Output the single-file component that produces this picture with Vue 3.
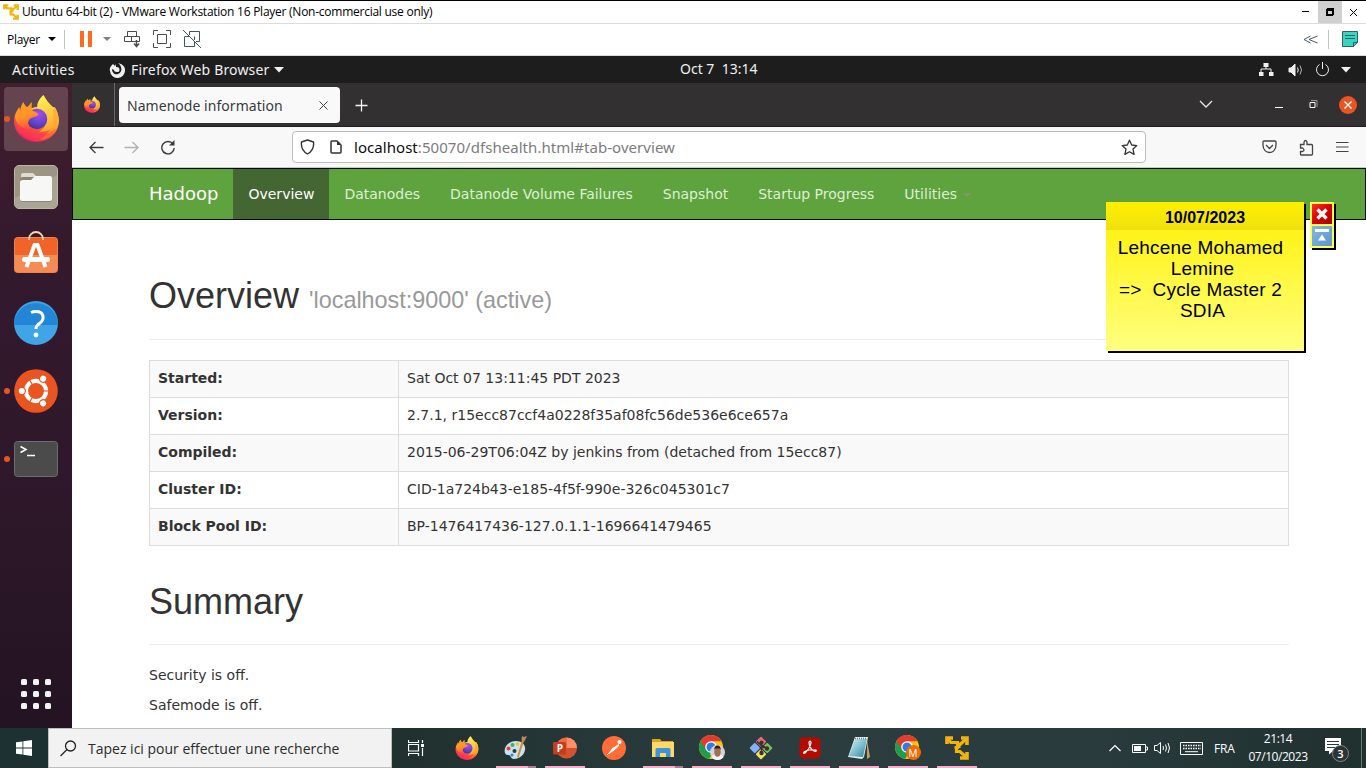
<script setup>
const navItems = ['Overview', 'Datanodes', 'Datanode Volume Failures', 'Snapshot', 'Startup Progress', 'Utilities']
const rows = [
  ['Started:', 'Sat Oct 07 13:11:45 PDT 2023'],
  ['Version:', '2.7.1, r15ecc87ccf4a0228f35af08fc56de536e6ce657a'],
  ['Compiled:', '2015-06-29T06:04Z by jenkins from (detached from 15ecc87)'],
  ['Cluster ID:', 'CID-1a724b43-e185-4f5f-990e-326c045301c7'],
  ['Block Pool ID:', 'BP-1476417436-127.0.1.1-1696641479465'],
]
const dock = [
  { icon: 'firefox', active: true, dot: true },
  { icon: 'files' },
  { icon: 'software' },
  { icon: 'help' },
  { icon: 'ubuntu', dot: true },
  { icon: 'terminal', dot: true },
]
const tasks = [
  { icon: 'firefox' },
  { icon: 'paint', line: 'multi' },
  { icon: 'ppt', line: 'single', letter: 'P' },
  { icon: 'postman' },
  { icon: 'explorer', line: 'multi' },
  { icon: 'chromeA', line: 'single' },
  { icon: 'git', line: 'single' },
  { icon: 'acrobat', line: 'single' },
  { icon: 'notepad', line: 'single' },
  { icon: 'chromeB', line: 'single', letter: 'M' },
  { icon: 'vmware', line: 'single' },
]
</script>

<template>
  <div class="screen">
    <svg class="defs" width="0" height="0">
      <defs>
        <linearGradient id="fxBody" x1="0.8" y1="0" x2="0.3" y2="1">
          <stop offset="0" stop-color="#fff44f" /><stop offset="0.35" stop-color="#ffb52a" /><stop offset="0.62" stop-color="#ff5b36" /><stop offset="1" stop-color="#e9106f" />
        </linearGradient>
        <linearGradient id="fxTail" x1="0.4" y1="0" x2="0.6" y2="1">
          <stop offset="0" stop-color="#fff155" /><stop offset="1" stop-color="#ffa42c" />
        </linearGradient>
        <radialGradient id="fxGlobe" cx="0.6" cy="0.25" r="0.75">
          <stop offset="0" stop-color="#a84bf0" /><stop offset="0.6" stop-color="#6a45cf" /><stop offset="1" stop-color="#4337a0" />
        </radialGradient>
        <linearGradient id="fxEar" x1="0" y1="0" x2="0.3" y2="1">
          <stop offset="0" stop-color="#ff9a20" /><stop offset="0.6" stop-color="#ff9528" /><stop offset="1" stop-color="#ff5a34" />
        </linearGradient>
        <linearGradient id="noteBlue" x1="0" y1="0" x2="1" y2="1">
          <stop offset="0" stop-color="#d8f1f5" /><stop offset="0.5" stop-color="#7fc0d0" /><stop offset="1" stop-color="#2f8096" />
        </linearGradient>
      </defs>
      <symbol id="firefox" viewBox="0 0 44 46">
        <path d="M9 7c1 2 2 4 4 5 2-2 3-3 4-5v6c4-2 8-2 12 0l11-1c3 5 4 10 4 13 0 12-10 21-22 21S0 37 0 26c0-7 3-11 5-14l1 5c1-4 2-7 3-10z" fill="url(#fxBody)" />
        <path d="M29 0c-5 4-7 9-6 13 5 1 9 5 9 11 0 5-3 9-7 12 10 0 19-5 18-16-1-8-8-8-14-20z" fill="url(#fxTail)" />
        <path d="M40 12c3 5 4 10 3 16-1 8-8 15-18 16 9-5 16-15 13-28z" fill="#ffa636" opacity="0.700" />
        <circle cx="22.500" cy="23.500" r="10" fill="url(#fxGlobe)" />
        <path d="M1 20c-2 10 4 22 18 25 11 1 19-5 22-12-8 7-20 7-26-1z" fill="#ff3f4c" opacity="0.500" />
        <path d="M9 7c1 2 2 4 4 5 2-2 3-3 4-5v8c3 1 6 2 7 4-2 3-7 2-9 5-2 3-1 6 1 9C6 33 1 27 1 20c1-2 3-4 4-8l1 4c0-3 1-6 3-9z" fill="url(#fxEar)" />
      </symbol>
      <symbol id="files" viewBox="0 0 44 44">
        <rect x="0.500" y="0.500" width="43" height="43" rx="4.500" fill="#9c9583" stroke="#bab5a5" />
        <path d="M1 33L43 10v29a4 4 0 0 1-4 4H5a4 4 0 0 1-4-4z" fill="#aaa494" />
        <path d="M7 10q0-2 2-2h10l3 3v8H7z" fill="#dedbd2" />
        <rect x="6" y="12" width="32" height="25" rx="3" fill="#8b8475" />
        <path d="M9 15h8l4-4h15q2 0 2 2v21q0 2-2 2H8q-2 0-2-2V17q0-2 3-2z" fill="#f7f7f5" />
      </symbol>
      <symbol id="software" viewBox="0 0 44 44">
        <rect x="0.500" y="7.500" width="43" height="35" rx="3" fill="#f06329" stroke="#f5814f" />
        <path d="M1 25h42v15q0 2-2 2H3q-2 0-2-2z" fill="#f58b55" />
        <path d="M15 10V9a7 7 0 0 1 14 0v1" fill="none" stroke="#f6d8b4" stroke-width="1.800" />
        <path d="M12.500 37l8-22h3l8 22" fill="none" stroke="#fff" stroke-width="4" />
        <rect x="8" y="27" width="28" height="5" rx="2.500" fill="#fff" />
      </symbol>
      <symbol id="help" viewBox="0 0 44 44">
        <circle cx="22" cy="22" r="22" fill="#3fa5e6" />
        <path d="M0 24a22 22 0 0 1 44 0z" fill="#2186d6" />
        <path d="M17 11.500q2-1 5-1c8 0 9 7.500 4 11.500-3 2-4 3-4 6" fill="none" stroke="#fff" stroke-width="3" />
        <circle cx="22" cy="34" r="2.400" fill="#fff" />
      </symbol>
      <symbol id="ubuntu" viewBox="-24 -24 48 48">
        <circle r="23.800" fill="#e95420" />
        <circle r="11" fill="none" stroke="#fff" stroke-width="4.600" />
        <g v-for="a in [60, 180, 300]" :key="a" :transform="`rotate(${a})`">
          <circle cx="15.500" r="4.600" fill="#e95420" />
          <circle cx="15.500" r="3.300" fill="#fff" />
          <path d="M-8 0h-6.500" stroke="#e95420" stroke-width="1.200" />
        </g>
      </symbol>
      <symbol id="terminal" viewBox="0 0 44 44">
        <rect x="0.500" y="4.500" width="43" height="35" rx="3" fill="#4b4b4b" stroke="#6e6e6e" />
        <path d="M6.500 9.500l5.500 3-5.500 3M13 18.500h8" fill="none" stroke="#fff" stroke-width="1.500" />
      </symbol>
      <symbol id="vmware" viewBox="0 0 24 24">
        <g fill="none" stroke="#f2b30b">
          <path d="M8 2H2v6M16 2h6v7M22 16v6h-7" stroke-width="3.600" />
          <path d="M2 2l4 4.500h6.500v5h-3M14 9.500L21 3M14 6.500v5.500M11.500 11.500v4h3.500L21 21" stroke-width="3.200" />
        </g>
      </symbol>
      <symbol id="chrome" viewBox="0 0 24 24">
        <circle cx="12" cy="12" r="12" fill="#fbc116" />
        <path d="M12 12L1.600 6A12 12 0 0 0 10 23.800L15.500 16z" fill="#1e9e4c" />
        <path d="M12 12L7 15 1.600 6A12 12 0 0 1 22.400 6.200H12z" fill="#e33b2e" />
        <circle cx="12" cy="12" r="5.800" fill="#fff" /><circle cx="12" cy="12" r="4.500" fill="#2f7de9" />
      </symbol>
      <symbol id="chromeA" viewBox="0 0 27 27">
        <use href="#chrome" x="0" y="1" width="24" height="24" />
        <circle cx="18.500" cy="18.500" r="7.500" fill="#d5d2d8" />
        <path d="M12.500 23q2-3 6-3t6 3a7.500 7.500 0 0 1-12 0z" fill="#f4f4f4" />
        <ellipse cx="18.500" cy="18" rx="3.200" ry="4.800" fill="#a36f51" />
        <path d="M15.200 16q0-4.500 3.300-4.500t3.300 4.500l-1-1.500h-4.600z" fill="#2c201c" />
      </symbol>
      <symbol id="chromeB" viewBox="0 0 27 27">
        <use href="#chrome" x="0" y="1" width="24" height="24" />
        <circle cx="18.500" cy="18.500" r="7.500" fill="#ee6c00" />
      </symbol>
      <symbol id="paint" viewBox="0 0 24 24">
        <path d="M1 17C-1 11 5 5 12 5c6 0 10 4 9 9-1 6-7 9-11 9-3 0-3-3-5-4-2 0-3 0-4-2z" fill="#c9e2f0" />
        <circle cx="4.500" cy="12.500" r="2" fill="#e04437" /><circle cx="8.500" cy="9" r="2" fill="#4cae43" /><circle cx="13.500" cy="8" r="1.800" fill="#f0c22f" /><circle cx="10.500" cy="15" r="2" fill="#233c47" /><circle cx="8" cy="19" r="1.600" fill="#3e7fd1" />
        <path d="M20 5L14.500 22l-1.500-1L18 4z" fill="#d98a32" /><path d="M17.500 4L18 0l2 1 3-1-2 4-1 2z" fill="#b98a62" />
      </symbol>
      <symbol id="ppt" viewBox="0 0 24 24">
        <circle cx="13.500" cy="12" r="10.500" fill="#d35230" />
        <path d="M13.500 1.500A10.500 10.500 0 0 1 24 12H13.500z" fill="#ff8f6b" /><path d="M3 12A10.500 10.500 0 0 1 13.500 1.500V12z" fill="#ed6c47" />
        <rect x="0" y="6" width="13" height="12.500" rx="1" fill="#c43e1c" />
      </symbol>
      <symbol id="postman" viewBox="0 0 24 24">
        <circle cx="12" cy="12" r="12" fill="#ff6c37" />
        <circle cx="17.500" cy="6" r="2" fill="#fff" /><path d="M16.500 8.500L10 13l-3 4.500 5-3.500 4.500-4z" fill="#fff" stroke="#fff" /><path d="M5 19l4-4" stroke="#fff" />
      </symbol>
      <symbol id="explorer" viewBox="0 0 24 24">
        <path d="M1 3h8l1.500 2H22v16H1z" fill="#dca51f" /><path d="M1 6h22v15H1z" fill="#ffd968" />
        <path d="M4.500 21v-7.500q0-1.500 1.500-1.500h12q1.500 0 1.500 1.500V21H15v-4H9v4z" fill="#3c95dc" />
      </symbol>
      <symbol id="git" viewBox="0 0 24 24">
        <g transform="rotate(45 12 12)">
          <rect x="3.800" y="3.800" width="7.600" height="7.600" rx="1" fill="#e76a70" />
          <rect x="12.600" y="3.800" width="7.600" height="7.600" rx="1" fill="#7fc05c" />
          <rect x="3.800" y="12.600" width="7.600" height="7.600" rx="1" fill="#80b3ff" />
          <rect x="12.600" y="12.600" width="7.600" height="7.600" rx="1" fill="#f6de64" />
        </g>
        <path d="M8 5.500l7 6.500M12.500 7v10M13 9.500l5 3" stroke="#3a322e" stroke-width="1.600" />
        <circle cx="12.500" cy="6.500" r="2" fill="#3a322e" /><circle cx="12.500" cy="17" r="2.200" fill="#3a322e" /><circle cx="18" cy="12.500" r="2.200" fill="#3a322e" />
      </symbol>
      <symbol id="acrobat" viewBox="0 0 24 24">
        <rect x="1.500" y="1.500" width="21" height="21" rx="4" fill="#b30b00" />
        <path d="M11 6q2-2 2 1-1 5-6 10-2 1-1-1 4-3 12-2 1 2-2 1-5-3-5-9z" fill="none" stroke="#fff" stroke-width="1.200" />
      </symbol>
      <symbol id="notepad" viewBox="0 0 24 24">
        <path d="M20 4l3 17-3 2z" fill="#c9a063" /><path d="M8 1h13l-4 20-2 2L1 21z" fill="#e7eceb" /><path d="M8 3h12l-4 18L2 20z" fill="url(#noteBlue)" /><path d="M8 2.500h12" stroke="#718084" stroke-dasharray="1 1" stroke-width="1.500" />
      </symbol>
    </svg>

    <header class="vm-title">
      <svg width="16" height="16"><use href="#vmware" /></svg>
      <span class="vm-name">Ubuntu 64-bit (2) - VMware Workstation 16 Player (Non-commercial use only)</span>
      <span class="wbtn"><svg width="10" height="10"><path d="M1 4.500h7" stroke="#000" /></svg></span>
      <span class="wbtn max"><svg width="8" height="8" shape-rendering="crispEdges"><path d="M0 1h1V0h7v7H7v1H0z" fill="#000" /><path d="M2 3h4v3H2z" fill="#d0d0d0" /></svg></span>
      <span class="wbtn"><svg width="9" height="9"><path d="M1 1l7 7M8 1l-7 7" stroke="#000" /></svg></span>
    </header>
    <div class="vm-bar">
      <span class="player">Player</span>
      <svg width="8" height="5"><path d="M0 0h8L4 4z" fill="#000" /></svg>
      <i class="sep"></i>
      <svg class="pause" width="12" height="16"><path d="M0 0h4v16H0zM8 0h4v16H8z" fill="#ff6a1c" /></svg>
      <svg class="dd" width="8" height="5"><path d="M0 0h8L4 4z" fill="#808080" /></svg>
      <svg class="cad" width="18" height="18" fill="none" stroke="#4c4c4c"><path d="M3.500 1.500h9v5h-9zM.5 6.500h7v5h-7zM7.500 6.500h8v5h-8z" /><path d="M12.500 10v6M10 13.500l2.500 3 2.500-3" stroke-width="1.500" /></svg>
      <svg class="full" width="18" height="18" fill="none" stroke="#4c4c4c"><path d="M.5 5V.5H5M13 .5h4.500V5M17.500 13v4.500H13M5 17.500H.5V13M4.500 4.500h9v9h-9z" /></svg>
      <svg class="unity" width="18" height="18" fill="none" stroke="#3f5563"><path d="M6.500 5V1.500h10v10H13M11.500 6.500V10M1.500 7v9.500h10V12M1.500 6.500h5M0 0l18 18" /></svg>
      <span class="grow"></span>
      <svg width="15" height="9" fill="none" stroke="#4c5963"><path d="M7.500 1L1 4.500 7.500 8M14.500 1L6 4.500l8.500 3.500" /></svg>
      <i class="sep s2"></i>
      <svg width="17" height="17"><path d="M.5.5h15v11l-4 4H.5z" fill="#32d7bd" stroke="#3c5a60" /><path d="M11.500 15.500v-4h4M3 4.500h10M3 7.500h10" stroke="#3c5a60" fill="none" /></svg>
    </div>

    <div class="gnome">
      <span class="act">Activities</span>
      <svg class="gfx" width="16" height="16"><path d="M4 2l2 2 1-2v3c4-1 5 5 1 5-2 0-3-1-3-2l-2-1c0 4 3 6 6 5 5-2 4-8 0-11 4 1 7 3 7 7a7.500 7.500 0 0 1-15 1C0 6 2 4 4 2z" fill="#f0f0f0" /></svg>
      <span class="gname">Firefox Web Browser</span>
      <svg width="10" height="6"><path d="M0 0h10L5 5.500z" fill="#f0f0f0" /></svg>
      <span class="clock">Oct 7&nbsp; 13:14</span>
      <span class="grow"></span>
      <svg width="16" height="15" fill="#f0f0f0"><path d="M5.500 1h5v4h-5zM1 10h4.500v4H1zM11 10h4.500v4H11z" /><path d="M8 4v3M3 10.500V7h10v3.500" fill="none" stroke="#f0f0f0" /></svg>
      <svg class="vol" width="16" height="14" fill="none" stroke="#f0f0f0"><path d="M1 5h2l4-4v12L3 9H1z" fill="#f0f0f0" /><path d="M9.500 4.500q1.500 2.500 0 5" /><path d="M12 2.500q3 4.500 0 9" opacity="0.700" /></svg>
      <svg class="pow" width="15" height="15" fill="none" stroke="#f0f0f0"><path d="M4.500 2.500a6 6 0 1 0 6 0" /><path d="M7.500 0v7" /></svg>
      <svg class="gdd" width="10" height="6"><path d="M0 0h10L5 5.500z" fill="#f0f0f0" /></svg>
    </div>

    <div class="work">
      <aside class="dock">
        <div v-for="d in dock" :key="d.icon" class="app" :class="{ active: d.active }">
          <i v-if="d.dot" class="dot"></i>
          <svg :class="d.icon"><use :href="'#' + d.icon" /></svg>
        </div>
        <div class="apps"><i v-for="n in 9" :key="n"></i></div>
      </aside>

      <main class="browser">
        <div class="tabs">
          <div class="pin"><svg width="16" height="17"><use href="#firefox" /></svg></div>
          <div class="tab"><span>Namenode information</span>
            <svg width="9" height="9"><path d="M.5.5l8 8M8.500.5l-8 8" stroke="#444" /></svg>
          </div>
          <svg class="plus" width="13" height="13"><path d="M6.500.5v12M.5 6.500h12" stroke="#f5f5f5" stroke-width="1.300" /></svg>
          <span class="grow"></span>
          <svg class="chev" width="14" height="9"><path d="M1 1l6 6 6-6" fill="none" stroke="#e8e8e8" stroke-width="1.300" /></svg>
          <svg class="tmin" width="9" height="10"><path d="M0 7.500h8" stroke="#fff" /></svg>
          <svg class="tmax" width="9" height="9" fill="none"><path d="M2 .5h6V7" stroke="#999" /><path d="M1 2.500h5v5H1z" stroke="#fff" /></svg>
          <svg width="18" height="18"><circle cx="9" cy="9" r="9" fill="#e95420" /><path d="M5.500 5.500l7 7M12.500 5.500l-7 7" stroke="#fff" stroke-width="1.400" /></svg>
        </div>
        <div class="nav">
          <svg width="15" height="13" fill="none" stroke="#3b3b3b" stroke-width="1.300"><path d="M14.500 6.500H1M6.500 1L1 6.500 6.500 12" /></svg>
          <svg class="fwd" width="15" height="13" fill="none" stroke="#b0b0b0" stroke-width="1.300"><path d="M.5 6.500H14M8.500 1L14 6.500 8.500 12" /></svg>
          <svg class="rel" width="16" height="16"><path d="M13 5a6.200 6.200 0 1 0 1.200 4" fill="none" stroke="#3b3b3b" stroke-width="1.400" /><path d="M14.500 1v5.500H9z" fill="#3b3b3b" /></svg>
          <div class="url">
            <svg width="15" height="16"><path d="M7.500 1l6 2q1 8-6 12Q.5 11 1.500 3z" fill="none" stroke="#333" stroke-width="1.400" stroke-linejoin="round" /></svg>
            <svg class="page" width="12" height="15"><path d="M2 1h5l4 4v7q0 1-1 1H2q-1 0-1-1V2q0-1 1-1z" fill="none" stroke="#333" stroke-width="1.500" /><path d="M7 1v4h4z" fill="#333" /></svg>
            <span class="addr"><b>localhost</b>:50070/dfshealth.html#tab-overview</span>
            <svg class="star" width="17" height="17"><path d="M8.500 1.200l2.200 4.800 5.100.6-3.800 3.500 1.100 5.300-4.600-2.700-4.600 2.700 1.100-5.300L1.200 6.600 6.300 6z" fill="none" stroke="#333" stroke-width="1.300" stroke-linejoin="round" /></svg>
          </div>
          <span class="grow"></span>
          <svg width="15" height="14" fill="none" stroke="#444" stroke-width="1.300"><path d="M2 1h11q1 0 1 1v3c0 10-13 10-13 0V2q0-1 1-1z" /><path d="M4 5l3.500 3.500L11 5" /></svg>
          <svg class="ext" width="15" height="17" fill="none" stroke="#444" stroke-width="1.300"><path d="M1.500 9V5.500H5V3q1.500-3 3 0v2.500h4.500q1 0 1 1V15q0 1-1 1H2q-.5 0-.5-1v-2.500h2q3-1.500 0-3.500z" /></svg>
          <svg class="burger" width="13" height="12"><path d="M0 1.500h12.500M0 6h12.500M0 10.500h12.500" stroke="#444" stroke-width="1.200" /></svg>
        </div>

        <nav class="hadoop">
          <span class="brand">Hadoop</span>
          <a v-for="(n, i) in navItems" :key="n" :class="{ on: i === 0 }">{{ n }}<i v-if="i === 5" class="caret"></i></a>
        </nav>
        <section class="page-body">
          <h1>Overview <small>'localhost:9000' (active)</small></h1>
          <table>
            <tbody>
              <tr v-for="r in rows" :key="r[0]"><th>{{ r[0] }}</th><td>{{ r[1] }}</td></tr>
            </tbody>
          </table>
          <h1 class="sum">Summary</h1>
          <p>Security is off.</p>
          <p>Safemode is off.</p>
        </section>
      </main>
    </div>

    <footer class="taskbar">
      <div class="start"><svg width="16" height="16"><path d="M0 2.300L6.500 1.400V7.500H0zM7.300 1.300L16 0v7.500H7.300zM0 8.500h6.500v6.100L0 13.700zM7.300 8.500H16V16l-8.700-1.300z" fill="#fff" /></svg></div>
      <div class="search">
        <svg width="17" height="17" fill="none" stroke="#222" stroke-width="1.300"><circle cx="10.500" cy="6" r="5" /><path d="M7 9.500L.5 16" /></svg>
        <span>Tapez ici pour effectuer une recherche</span>
      </div>
      <div class="taskview"><svg width="17" height="16" fill="none" stroke="#fff"><path d="M.5 0v2.500h10V0M.5 4.500h10v6.500H.5zM.5 16v-2.500h10V16M14.500 0v3M14.500 8v8" stroke-width="1.200" /><path d="M13 4h3v3h-3z" fill="#fff" stroke="none" /></svg></div>
      <div v-for="t in tasks" :key="t.icon" class="task" :class="t.line"><svg :class="'t-' + t.icon"><use :href="'#' + t.icon" /></svg><span v-if="t.letter" class="letter" :class="'l-' + t.icon">{{ t.letter }}</span></div>
      <span class="grow"></span>
      <div class="tray">
        <svg width="12" height="8"><path d="M.5 7L6 1.500 11.500 7" fill="none" stroke="#fff" stroke-width="1.200" /></svg>
        <svg class="bat" width="16" height="9"><path d="M.5.5h13v8H.5zM14 3h1.500v3H14" fill="none" stroke="#fff" /><path d="M2 2h7v5H2z" fill="#fff" /></svg>
        <svg class="spk" width="18" height="14" fill="none" stroke="#fff"><path d="M.5 4.500H3l3.500-3v11L3 9.500H.5zM9 5q1 2 0 4M11.500 3.500q2 3.500 0 7M14 2q3 5 0 10" /></svg>
        <svg class="kb" width="23" height="13"><path d="M.5.5h22v12H.5z" fill="none" stroke="#fff" /><path d="M3 3.500h18M3 6.500h18" stroke="#fff" stroke-dasharray="1.500 1" stroke-width="1.400" /><path d="M5 9.700h13" stroke="#fff" /></svg>
        <span class="lang">FRA</span>
        <div class="time"><span>21:14</span><span class="date">07/10/2023</span></div>
        <div class="notif">
          <svg width="26" height="26"><path d="M1 1h16v13H9l-4 3.500V14H1z" fill="#fff" /><path d="M3 4.500h12M3 7.500h12M3 10.500h8" stroke="#2a3a3c" /><circle cx="16.500" cy="16.500" r="8" fill="#2d3334" stroke="#818889" /></svg>
          <span class="count">3</span>
        </div>
        <i class="peek"></i>
      </div>
    </footer>

    <div class="note">
      <div class="nh">10/07/2023</div>
      <div class="nb">Lehcene Mohamed<br><span class="l2">Lemine</span><br><span class="l3">=&gt;&nbsp; Cycle Master 2</span><br><span class="l2">SDIA</span></div>
    </div>
    <div class="note-btns">
      <svg class="nx" width="20" height="20"><path d="M5.500 5.500l9 9M14.500 5.500l-9 9" stroke="#fff" stroke-width="3.400" /></svg>
      <svg class="nu" width="20" height="20"><path d="M3 3h14v3H3zM10 8.500l4 6H6z" fill="#fff" /></svg>
    </div>
  </div>
</template>

<style>
body { margin: 0; overflow: hidden; }
</style>
<style scoped>
* { box-sizing: border-box; }
svg { display: block; flex: none; }
span { white-space: nowrap; }
.screen { position: relative; width: 1366px; height: 768px; display: flex; flex-direction: column; overflow: hidden; background: #fff; font-family: "Noto Sans", sans-serif; }
.defs { position: absolute; }
.grow { flex: 1; }
.vm-title { height: 24px; border-top: 1px solid #000; border-bottom: 1px solid #dcdcdc; display: flex; align-items: center; padding-left: 3px; font: 12px/22px "Open Sans", sans-serif; color: #000; }
.vm-name { margin: 0 0 0 3px; flex: 1; letter-spacing: -0.250px; }
.wbtn { width: 24px; height: 22px; display: flex; align-items: center; justify-content: center; }
.wbtn:last-child { padding-right: 2px; }
.max { background: #d0d0d0; }
.vm-bar { height: 32px; border-bottom: 1px solid #dcdcdc; display: flex; align-items: center; padding: 0 7px 1px; font: 12px "Open Sans", sans-serif; color: #000; }
.player { width: 41px; letter-spacing: -0.3px; }
.sep { width: 1px; height: 19px; background: #c4c4c4; margin: 0 15px 0 8px; }
.sep.s2 { margin: 0 13px 0 10px; }
.dd { margin-left: 11px; }
.cad { margin-left: 13px; }
.full { margin-left: 11px; }
.unity { margin-left: 12px; }
.gnome { position: relative; height: 27px; background: #1d1d1d; color: #f0f0f0; display: flex; align-items: center; padding: 0 15px 0 12px; font-size: 14px; }
.act { width: 97px; letter-spacing: 0.450px; }
.gname { margin: 0 5px 0 6px; letter-spacing: 0.160px; }
.clock { position: absolute; left: 680px; top: 3px; }
.vol { margin-left: 14px; }
.pow { margin-left: 11px; }
.gdd { margin-left: 11px; }
.work { height: 645px; display: flex; }
.dock { width: 72px; padding: 4px; background: linear-gradient(#411f2e, #34192d 25%, #2f182b 60%, #231322); display: flex; flex-direction: column; gap: 4px; }
.app { position: relative; height: 64px; border-radius: 4px; display: flex; align-items: center; justify-content: center; flex: none; }
.app.active { background: #64454f; }
.app svg { width: 44px; height: 44px; }
.app svg.firefox { width: 45px; height: 47px; margin-bottom: 2px; }
.app svg.software { margin-bottom: 6px; }
.dot { position: absolute; left: 0; top: 29px; width: 6px; height: 6px; border-radius: 50%; background: #e95420; }
.apps { margin: auto auto 15px; display: grid; grid-template-columns: repeat(3, 6px); gap: 6px; }
.apps i { width: 6px; height: 6px; border-radius: 1.500px; background: #f2f2f2; }
.browser { width: 1294px; display: flex; flex-direction: column; background: #fff; }
.tabs { height: 44px; background: #333032; border-bottom: 1px solid #1f1d1e; display: flex; align-items: center; padding-right: 9px; flex: none; }
.pin { width: 43px; height: 43px; border-right: 1px solid #6a6869; display: flex; align-items: center; padding-left: 12px; }
.tab { width: 221px; height: 36px; margin-left: 4px; border-radius: 4px; background: #f9f9fa; display: flex; align-items: center; justify-content: space-between; padding: 2px 12px 0 8px; font-size: 14px; letter-spacing: 0.040px; color: #3a3a3c; }
.plus { margin: 2px 0 0 15px; }
.chev { margin-right: 62px; }
.tmin { margin-right: 25px; }
.tmax { margin-right: 21px; }
.nav { height: 41px; background: #f8f8f9; border-bottom: 1px solid #c9c9cc; display: flex; align-items: center; padding: 0 17px 0 17px; flex: none; }
.fwd { margin-left: 20px; }
.rel { margin-left: 21px; margin-right: 116px; }
.url { width: 854px; height: 32px; border: 1px solid #bcbcbe; border-radius: 4px; background: #fff; display: flex; align-items: center; padding: 0 7px; font-size: 15px; }
.page { margin-left: 15px; }
.addr { flex: 1; margin-left: 12px; color: #7c7c7e; letter-spacing: 0.050px; }
.addr b { font-weight: 400; color: #0c0c0d; }
.ext { margin-left: 22px; }
.burger { margin-left: 22px; }
.hadoop { height: 52px; border: 1px solid #080808; background: #5fa33e; display: flex; padding-left: 61px; font: 14px/50px "DejaVu Sans", sans-serif; flex: none; }
.brand { padding: 0 15px; font-size: 18px; color: #fff; }
.hadoop a { padding: 0 15px; color: #dcf0d3; white-space: nowrap; }
.hadoop a.on { background: #446633; color: #fff; }
.caret { display: inline-block; border: 4px solid transparent; border-top-color: #80967a; border-bottom: 0; margin-left: 6px; vertical-align: middle; }
.page-body { padding: 56px 77px 0; color: #333; font: 14px/20px "DejaVu Sans", sans-serif; }
h1 { margin: 0 0 20px; height: 64px; border-bottom: 1px solid #eee; font: 36px/40px "Liberation Sans", sans-serif; }
small { font-size: 23.400px; color: #999; }
table { width: 1140px; border-collapse: collapse; table-layout: fixed; }
th, td { height: 37px; border: 1px solid #ddd; padding: 0 8px 3px; text-align: left; line-height: 20px; }
th { width: 249px; }
tr:nth-child(odd) { background: #f9f9f9; }
h1.sum { margin-top: 36px; height: 63px; }
p { margin: 0 0 10px; }
.taskbar { height: 40px; background: linear-gradient(90deg, #1d3032, #20312f 30%, #2b3d3f 55%, #293b3d 80%, #20302f); display: flex; color: #fff; font-family: "Open Sans", sans-serif; }
.start { width: 48px; display: flex; align-items: center; justify-content: center; }
.search { width: 344px; background: #f2f2f2; border: 1px solid #bdbdbd; display: flex; align-items: center; gap: 11px; padding-left: 11px; font-size: 14px; color: #2b2b2b; }
.taskview { width: 55px; display: flex; align-items: center; padding-left: 16px; }
.task { position: relative; width: 40px; height: 40px; margin-right: 9px; display: flex; align-items: center; justify-content: center; border-bottom: 2px solid transparent; padding-top: 1px; }
.task svg { width: 24px; height: 24px; }
.task svg.t-chromeA, .task svg.t-chromeB { width: 27px; height: 27px; }
.letter { position: absolute; line-height: 12px; width: 14px; text-align: center; color: #fff; }
.l-ppt { left: 8px; top: 14px; font-size: 10px; font-weight: 700; }
.l-chromeB { left: 18px; top: 19px; font-size: 10px; }
.task.single { border-color: #f9adc6; }
.task.multi { border-image: linear-gradient(90deg, #f9adc6 31px, #ab7f91 31px) 1; }
.tray { display: flex; align-items: center; }
.bat { margin-left: 11px; }
.spk { margin-left: 6px; }
.kb { margin-left: 8px; }
.lang { margin-left: 11px; width: 22px; font-size: 12px; letter-spacing: -0.200px; }
.time { width: 84px; display: flex; flex-direction: column; align-items: center; font-size: 12px; line-height: 18px; letter-spacing: -0.450px; }
.notif { position: relative; margin: 4px 0 0 4px; }
.count { position: absolute; left: 11px; top: 10px; width: 11px; text-align: center; font-size: 11px; line-height: 13px; font-weight: 600; }
.peek { width: 1px; height: 40px; background: #6a7778; margin: 0 4px 0 11px; }
.note { position: absolute; left: 1106px; top: 202px; width: 198px; height: 149px; background: linear-gradient(#fff000, #ffff80); box-shadow: 2px 2px 0 #000; color: #000; text-align: center; font-family: "Liberation Sans", sans-serif; }
.nh { height: 28px; background: linear-gradient(#fff000, #efe010); font: bold 16px/31px "Liberation Sans", sans-serif; }
.nb { margin-top: 7px; font-size: 19px; line-height: 21px; letter-spacing: 0.200px; padding-right: 9px; }
.l2 { position: relative; left: 2px; }
.note-btns { position: absolute; left: 1310px; top: 202px; width: 24px; height: 46px; padding: 2px; background: #ffff50; box-shadow: 2px 2px 0 #000; display: flex; flex-direction: column; gap: 2px; }
.nx { background: linear-gradient(135deg, #ff3030, #d80000 50%, #a80000); }
.nu { background: linear-gradient(135deg, #86b8e4, #5b94cd); }
</style>
